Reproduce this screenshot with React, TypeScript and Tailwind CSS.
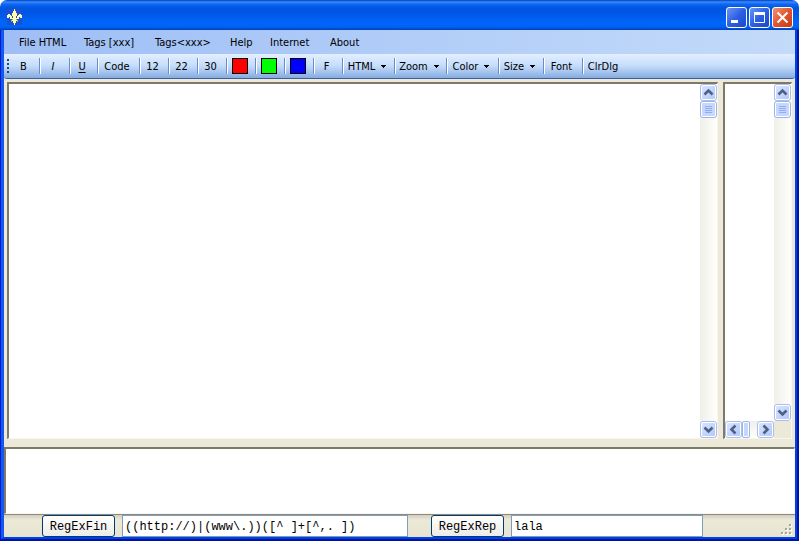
import React from 'react'

const menus = [
  { label: 'File HTML', width: 'w-[65px]' },
  { label: 'Tags [xxx]', width: 'w-[71px]' },
  { label: 'Tags<xxx>', width: 'w-[75px]' },
  { label: 'Help', width: 'w-[40px]' },
  { label: 'Internet', width: 'w-[60px]' },
  { label: 'About', width: 'w-[46px]' },
]

const tools = [
  { label: 'B', width: 'w-[27px]' },
  { label: 'I', width: 'w-[28px]', style: 'italic' },
  { label: 'U', width: 'w-[26px]', style: 'underline underline-offset-2' },
  { label: 'Code', width: 'w-[40px]' },
  { label: '12', width: 'w-[27px]' },
  { label: '22', width: 'w-[27px]' },
  { label: '30', width: 'w-[27px]' },
  { label: 'Red', width: 'w-[27px]', swatch: 'bg-[#ff0000]' },
  { label: 'Green', width: 'w-[27px]', swatch: 'bg-[#00ff00]' },
  { label: 'Blue', width: 'w-[27px]', swatch: 'bg-[#0000ff]' },
  { label: 'F', width: 'w-[27px]' },
  { label: 'HTML', width: 'w-[50px]', menu: true },
  { label: 'Zoom', width: 'w-[50px]', menu: true },
  { label: 'Color', width: 'w-[50px]', menu: true },
  { label: 'Size', width: 'w-[43px]', menu: true },
  { label: 'Font', width: 'w-[37px]' },
  { label: 'ClrDlg', width: 'w-[42px]' },
]

const arrows = {
  up: 'M4 10 L8 6 L12 10',
  down: 'M4 6 L8 10 L12 6',
  left: 'M10 4 L6 8 L10 12',
  right: 'M6 4 L10 8 L6 12',
}

function FleurIcon() {
  return (
    <svg width="16" height="16" viewBox="0 0 16 16" shapeRendering="crispEdges">
      <rect width="15" height="16" fill="#1c50d0" />
      <path
        fill="#ffffb0"
        d="M7 0h1v2h1v2h1v3H9v2h1V7h1V6h1V5h2v1h1v3h-2V8h-1v2H9v1h1v1H9v2H8v2H7v-2H6v-2H5v-1h1v-1H3V8H2v1H0V6h1V5h2v1h1v1h1v2h1V7H5V4h1V2h1z"
      />
      <path fill="#8cbf6c" d="M4 11h1v2H4zM10 11h1v2h-1zM5 10h1v1H5zM9 10h1v1H9z" />
    </svg>
  )
}

function TitleButton({ label, close, children }: { label: string; close?: boolean; children: React.ReactNode }) {
  return (
    <button
      type="button"
      aria-label={label}
      className={
        'flex size-[21px] items-center justify-center rounded-[3px] border border-white bg-linear-to-br ' +
        (close ? 'from-[#f09070] via-[#e25430] to-[#c03c14]' : 'from-[#6c94f4] via-[#2c60e4] to-[#1c48c8]')
      }
    >
      <svg width="19" height="19" viewBox="0 0 19 19" fill="none" stroke="#ffffff">
        {children}
      </svg>
    </button>
  )
}

function TitleBar() {
  return (
    <header className="flex h-[30px] shrink-0 items-center rounded-t-[7px] bg-[linear-gradient(to_bottom,#0040c8_0px,#3a8cfa_2px,#1068f0_4px,#0054e2_8px,#0058e6_14px,#0066fc_23px,#0062f4_27px,#0040b8_30px)] pt-1 pr-1.5 pl-[7px]">
      <FleurIcon />
      <div className="ml-auto flex gap-0.5">
        <TitleButton label="Minimize">
          <path d="M4 13.5h7" strokeWidth="3" />
        </TitleButton>
        <TitleButton label="Maximize">
          <path d="M4 5.5h11" strokeWidth="3" />
          <path d="M4.5 5v9.5h10V5" />
        </TitleButton>
        <TitleButton label="Close" close>
          <path d="M4.5 4.5l10 10M14.5 4.5l-10 10" strokeWidth="2" />
        </TitleButton>
      </div>
    </header>
  )
}

function MenuBar() {
  return (
    <nav className="flex h-6 shrink-0 items-center bg-linear-to-r from-[#9ebef5] to-[#c3daf9] pt-0.5 pl-[15px]">
      {menus.map((menu, i) => (
        <button key={i} type="button" className={`${menu.width} shrink-0 text-left whitespace-nowrap`}>
          {menu.label}
        </button>
      ))}
    </nav>
  )
}

function ToolBar() {
  return (
    <div
      role="toolbar"
      className="flex h-[25px] shrink-0 items-center rounded-b-[3px] border-b border-[#3b619c] bg-linear-to-b from-[#e3efff] via-[#c4dcfb] to-[#86abe0] pl-[3px]"
    >
      <div className="mr-[3px] flex flex-col gap-0.5">
        <span className="size-0.5 bg-[#27417a]" />
        <span className="size-0.5 bg-[#27417a]" />
        <span className="size-0.5 bg-[#27417a]" />
        <span className="size-0.5 bg-[#27417a]" />
      </div>
      {tools.map((tool, i) => (
        <React.Fragment key={i}>
          {i > 0 && <div className="h-4 w-0.5 shrink-0 border-r border-l border-r-white border-l-[#6a8ccb]" />}
          <button
            type="button"
            aria-label={tool.label}
            className={`${tool.width} flex shrink-0 items-center justify-center pr-1 whitespace-nowrap`}
          >
            {tool.swatch ? (
              <span className={`${tool.swatch} size-4 border border-black`} />
            ) : (
              <span className={`${tool.style ?? ''} pt-0.5`}>{tool.label}</span>
            )}
            {tool.menu && (
              <svg className="ml-1.5" width="5" height="3" viewBox="0 0 5 3" shapeRendering="crispEdges">
                <path d="M0 0h5v1H4v1H3v1H2V2H1V1H0z" />
              </svg>
            )}
          </button>
        </React.Fragment>
      ))}
    </div>
  )
}

function ScrollButton({ direction }: { direction: keyof typeof arrows }) {
  return (
    <button
      type="button"
      aria-label={`Scroll ${direction}`}
      className="flex size-[17px] shrink-0 items-center justify-center rounded-[3px] border border-[#a8bef0] bg-linear-to-br from-[#dce6fe] to-[#b0c6f8] outline outline-1 -outline-offset-2 outline-white"
    >
      <svg width="15" height="15" viewBox="0.5 0.5 15 15">
        <path d={arrows[direction]} fill="none" stroke="#4d6185" strokeWidth="2.6" />
      </svg>
    </button>
  )
}

function VerticalScroll() {
  return (
    <div className="flex w-[17px] shrink-0 flex-col bg-linear-to-r from-[#f0f0ea] to-[#fefefb]">
      <ScrollButton direction="up" />
      <div className="flex h-[17px] w-[17px] flex-col items-center justify-center gap-px rounded-[3px] border border-[#9cb4ec] bg-[#c8d6fb] outline outline-1 -outline-offset-2 outline-white">
        <span className="h-px w-[7px] bg-[#8cb0f8]" />
        <span className="h-px w-[7px] bg-[#8cb0f8]" />
        <span className="h-px w-[7px] bg-[#8cb0f8]" />
        <span className="h-px w-[7px] bg-[#8cb0f8]" />
      </div>
      <div className="flex-1" />
      <ScrollButton direction="down" />
    </div>
  )
}

const sunken = 'border-t-2 border-l-2 border-r border-b border-t-[#7d7a6c] border-l-[#7d7a6c] border-r-[#f8f6ee] border-b-[#f8f6ee]'

function Editors() {
  return (
    <main className="flex min-h-0 flex-1 gap-[5px] pt-[3px] pr-[3px] pb-2 pl-[3px]">
      <section className={`${sunken} flex min-w-0 flex-1 bg-white`}>
        <textarea aria-label="Source" className="min-w-0 flex-1 resize-none p-1 outline-none" />
        <VerticalScroll />
      </section>
      <section className={`${sunken} flex w-[69px] shrink-0 flex-col bg-[#ece9d8]`}>
        <div className="flex min-h-0 flex-1">
          <textarea aria-label="Preview" className="min-w-0 flex-1 resize-none bg-white p-1 outline-none" />
          <VerticalScroll />
        </div>
        <div className="mr-[17px] flex bg-linear-to-b from-[#f0f0ea] to-[#fefefb]">
          <ScrollButton direction="left" />
          <span className="h-[17px] w-2 rounded-[2px] border border-[#9cb4ec] bg-[#c8d6fb] outline outline-1 -outline-offset-2 outline-white" />
          <div className="flex-1" />
          <ScrollButton direction="right" />
        </div>
      </section>
    </main>
  )
}

function RegExButton({ label }: { label: string }) {
  return (
    <button
      type="button"
      className="w-[73px] shrink-0 rounded-[3px] border border-[#003c74] bg-linear-to-b from-white to-[#ecebe6] pt-0.5 text-center"
    >
      {label}
    </button>
  )
}

function StatusBar() {
  return (
    <footer className="flex h-[23px] shrink-0 border-t border-[#8e8b7c] bg-[linear-gradient(to_bottom,#d2cfc0,#ece9d8_5px,#e6e3d0)] pr-[3px] pl-[38px] font-['Liberation_Mono',monospace] text-[12px]">
      <RegExButton label="RegExFin" />
      <input
        aria-label="Find expression"
        defaultValue="((http://)|(www\.))([^ ]+[^,. ])"
        className="ml-[7px] w-[286px] min-w-0 border border-[#7f9db9] bg-white px-0.5 pt-0.5 outline-none"
      />
      <div className="w-[23px] shrink-0" />
      <RegExButton label="RegExRep" />
      <input
        aria-label="Replacement"
        defaultValue="lala"
        className="ml-[7px] w-[192px] min-w-0 border border-[#7f9db9] bg-white px-0.5 pt-0.5 outline-none"
      />
      <svg className="mt-auto mb-0.5 ml-auto" width="11" height="11" viewBox="0 0 11 11" shapeRendering="crispEdges">
        <path fill="#ffffff" d="M9 1h2v2H9zM5 5h2v2H5zM9 5h2v2H9zM1 9h2v2H1zM5 9h2v2H5zM9 9h2v2H9z" />
        <path fill="#a8a594" d="M8 0h2v2H8zM4 4h2v2H4zM8 4h2v2H8zM0 8h2v2H0zM4 8h2v2H4zM8 8h2v2H8z" />
      </svg>
    </footer>
  )
}

export default function App() {
  return (
    <div className="flex h-screen flex-col bg-white font-['DejaVu_Sans_Condensed','DejaVu_Sans',sans-serif] text-[11px] leading-4 text-black">
      <TitleBar />
      <div className="flex min-h-0 flex-1 border-r-2 border-b-2 border-l border-[#0014a0] border-l-[#0019cf]">
        <div className="flex min-w-0 flex-1 flex-col border-r-2 border-b-2 border-l-3 border-[#0040e8] border-l-[#1058f0] bg-[#ece9d8]">
          <MenuBar />
          <ToolBar />
          <Editors />
          <textarea
            aria-label="Log"
            className={`${sunken} block h-[67px] w-full shrink-0 resize-none bg-white p-1 outline-none`}
          />
          <StatusBar />
        </div>
      </div>
    </div>
  )
}
